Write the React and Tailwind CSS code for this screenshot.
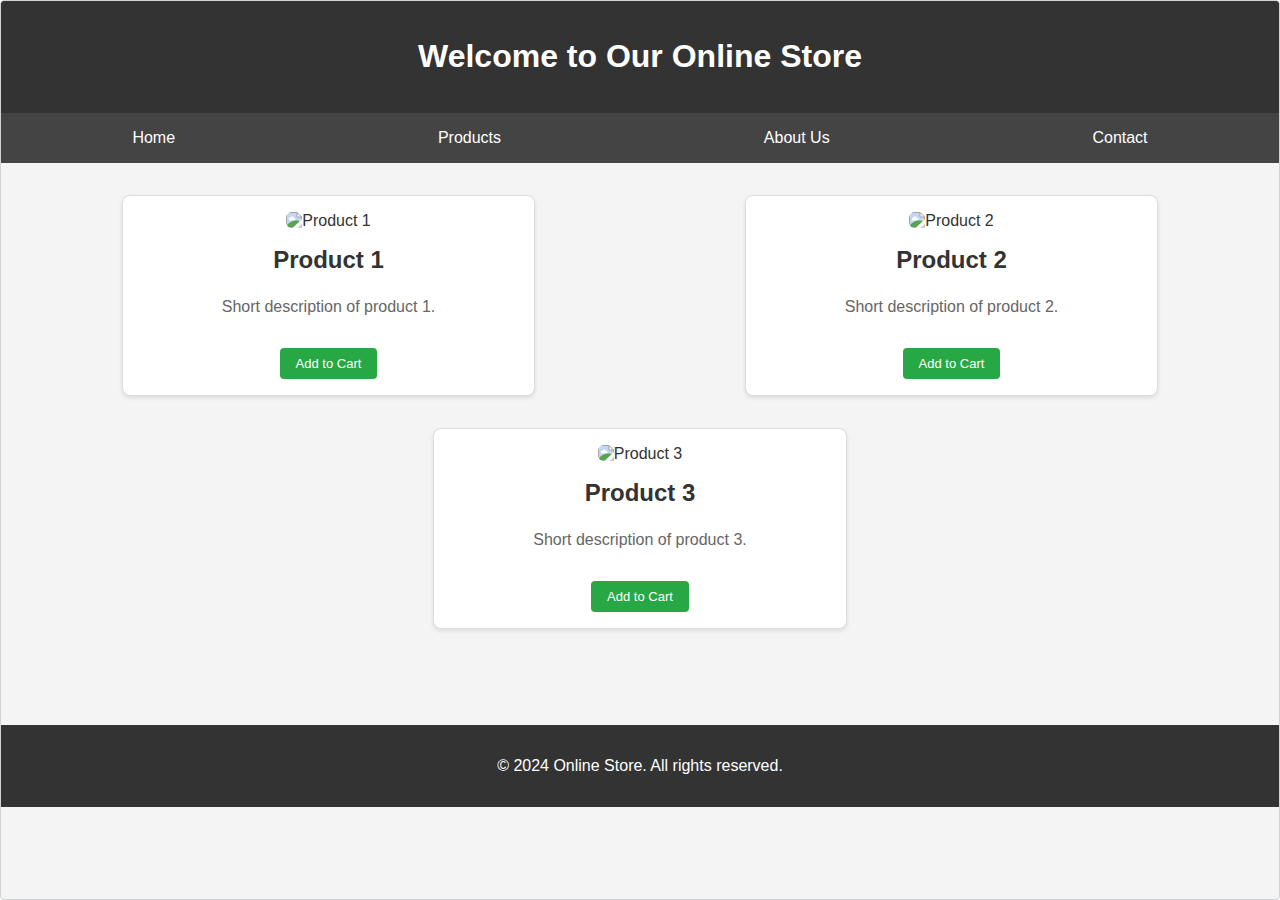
const navLinks = [
  { label: 'Home', href: '#home' },
  { label: 'Products', href: '#products' },
  { label: 'About Us', href: '#about' },
  { label: 'Contact', href: '#contact' },
];

const products = [
  { id: 1, name: 'Product 1', description: 'Short description of product 1.' },
  { id: 2, name: 'Product 2', description: 'Short description of product 2.' },
  { id: 3, name: 'Product 3', description: 'Short description of product 3.' },
];

const MissingImageIcon = () => (
  <svg viewBox="0 0 16 16" className="w-4 h-4 rounded-l-md shrink-0" aria-hidden="true">
    <path d="M0 0h11l5 5v11H0z" fill="#c3d6f3" />
    <path d="M3 7.500a1.500 1.500 0 0 1 1.400-2A2 2 0 0 1 8 6a1.300 1.300 0 0 1 .6 2.500H3.700a1 1 0 0 1-.7-1z" fill="#fff" />
    <path d="M1 15v-2C3.500 10.500 6.500 8.500 9.500 8.500c2.300 0 4 .4 5.500 1.500V15z" fill="#57a450" />
    <path d="M.5 0v16M0 .5h11M15.500 5v11M0 15.500h16" fill="none" stroke="#a3a3a3" />
    <path d="M16 7v7l-2 2H6.500z" fill="#fff" />
    <path d="M16 11.500V16h-4.500z" fill="#c9cfc9" />
    <path d="M11 .5V5h4.500z" fill="#fff" stroke="#a3a3a3" />
  </svg>
);

const ProductCard = ({ product }) => {
  return (
    <article className="w-[calc(33%+2px)] m-4 p-4 bg-white border border-[#dddddd] rounded-lg shadow-[0_2px_4px_rgba(0,0,0,0.1)] text-center">
      <div className="flex justify-center text-base leading-[18px]">
        <MissingImageIcon />
        <span>{product.name}</span>
      </div>
      <h2 className="mt-4 text-2xl leading-7 font-bold">{product.name}</h2>
      <p className="mt-6 text-base leading-[18px] text-[#666666]">{product.description}</p>
      <button
        type="button"
        className="block mx-auto mt-8 px-4 py-2 bg-[#28a745] text-white text-[13px] leading-[15px] rounded-sm cursor-pointer hover:bg-[#218838]"
      >
        Add to Cart
      </button>
    </article>
  );
};

const App = () => {
  return (
    <div className="min-h-screen bg-[#f4f4f4] text-[#333333] border border-[#d0d4d4] rounded-sm overflow-hidden font-['Liberation_Sans',Arial,sans-serif]">
      {/* Header */}
      <header className="pt-9 pb-[38px] bg-[#333333] text-white text-center">
        <h1 className="text-[32px] leading-[38px] font-bold">Welcome to Our Online Store</h1>
      </header>

      {/* Navigation */}
      <nav className="flex justify-around py-4 bg-[#444444]">
        {navLinks.map((link) => (
          <a key={link.label} href={link.href} className="text-base leading-[18px] text-white">
            {link.label}
          </a>
        ))}
      </nav>

      {/* Products */}
      <main className="flex flex-wrap justify-around p-4 mb-16">
        {products.map((product) => (
          <ProductCard key={product.id} product={product} />
        ))}
      </main>

      {/* Footer */}
      <footer className="py-8 bg-[#333333] text-white text-center">
        <p className="text-base leading-[18px]">© 2024 Online Store. All rights reserved.</p>
      </footer>
    </div>
  );
};

export default App;
